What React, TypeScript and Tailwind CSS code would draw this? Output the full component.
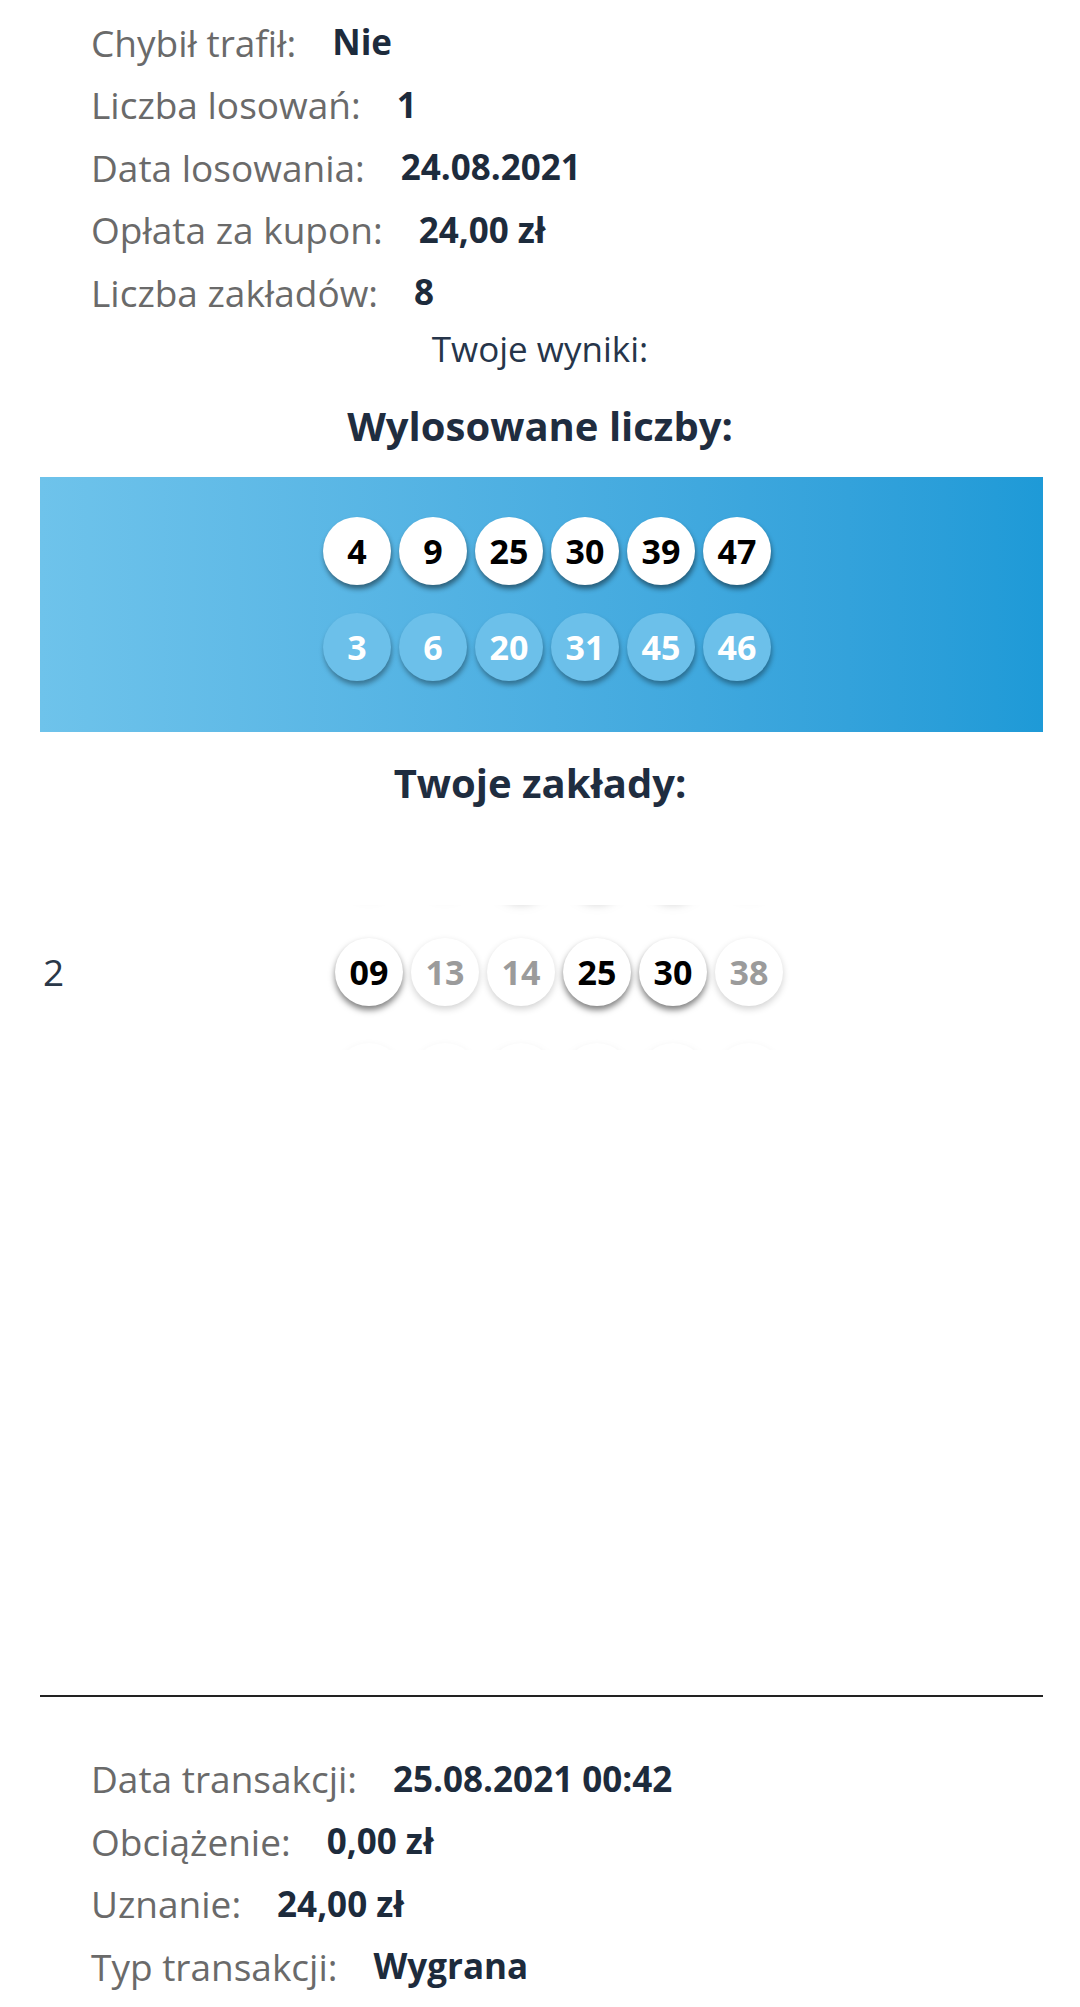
import React from "react";

type Variant = "drawn" | "plus" | "hit" | "miss";

function Ball({ n, v }: { n: string; v: Variant }) {
  const styles: Record<Variant, string> = {
    drawn: "bg-white text-black shadow-[1px_4px_5px_rgba(0,0,0,0.45)]",
    plus: "bg-[#6cc0ea] text-white shadow-[1px_4px_5px_rgba(0,0,0,0.35)]",
    hit: "bg-white text-black shadow-[0px_4px_6px_rgba(0,0,0,0.5)]",
    miss: "bg-white text-[#9b9b9b] shadow-[0px_3px_7px_rgba(0,0,0,0.18)]",
  };
  return (
    <div
      className={`w-[68px] h-[68px] rounded-full flex items-center justify-center text-[34px] font-bold leading-none shrink-0 ${styles[v]}`}
    >
      {n}
    </div>
  );
}

function GhostBall({ hit }: { hit: boolean }) {
  return (
    <div
      className={`w-[68px] h-[68px] rounded-full bg-white shrink-0 ${
        hit
          ? "shadow-[0px_5px_7px_rgba(0,0,0,0.5)]"
          : "shadow-[0px_2px_6px_rgba(0,0,0,0.12)]"
      }`}
    />
  );
}

function InfoRow({ label, value }: { label: string; value: string }) {
  return (
    <div className="h-[62.5px] flex items-center gap-[36px] pl-[91px]">
      <span className="text-[37px] text-[#6a6a6a]">{label}</span>
      <span className="text-[35px] font-bold text-[#1d2b3c]">{value}</span>
    </div>
  );
}

function BetRow({ label, balls }: { label: string; balls: { n: string; hit: boolean }[] }) {
  return (
    <div className="h-[105px] flex items-center pl-[43px]">
      <span className="w-[292px] text-[37px] text-[#2a3848]">{label}</span>
      <div className="flex gap-[8px]">
        {balls.map((b, i) => (
          <Ball key={i} n={b.n} v={b.hit ? "hit" : "miss"} />
        ))}
      </div>
    </div>
  );
}

function GhostRow({ hits, className }: { hits: boolean[]; className?: string }) {
  return (
    <div className={`h-[105px] flex items-center pl-[335px] ${className ?? ""}`}>
      <div className="flex gap-[8px]">
        {hits.map((h, i) => (
          <GhostBall key={i} hit={h} />
        ))}
      </div>
    </div>
  );
}

export default function App() {
  const font = { fontFamily: '"Open Sans", "Noto Sans", sans-serif' };
  const drawn = ["4", "9", "25", "30", "39", "47"];
  const plus = ["3", "6", "20", "31", "45", "46"];
  const bet = [
    { n: "09", hit: true },
    { n: "13", hit: false },
    { n: "14", hit: false },
    { n: "25", hit: true },
    { n: "30", hit: true },
    { n: "38", hit: false },
  ];

  return (
    <div className="w-[1080px] min-h-[2007px] bg-white pt-[11px]" style={font}>
      <InfoRow label="Chybił trafił:" value="Nie" />
      <InfoRow label="Liczba losowań:" value="1" />
      <InfoRow label="Data losowania:" value="24.08.2021" />
      <InfoRow label="Opłata za kupon:" value="24,00 zł" />
      <InfoRow label="Liczba zakładów:" value="8" />

      <div className="h-[51px] flex items-center justify-center text-[35px] text-[#26354a]">
        Twoje wyniki:
      </div>

      <div className="h-[102.5px] flex items-center justify-center text-[40px] font-bold text-[#1f2d40]">
        Wylosowane liczby:
      </div>

      <div className="ml-[40px] mr-[37px] h-[255px] bg-gradient-to-r from-[#6ec3eb] to-[#1e9ad7] pt-[40px] flex flex-col gap-[28px]">
        <div className="flex justify-center gap-[8px] pl-[11px]">
          {drawn.map((n) => (
            <Ball key={n} n={n} v="drawn" />
          ))}
        </div>
        <div className="flex justify-center gap-[8px] pl-[11px]">
          {plus.map((n) => (
            <Ball key={n} n={n} v="plus" />
          ))}
        </div>
      </div>

      <div className="h-[102px] flex items-center justify-center text-[40px] font-bold text-[#1f2d40]">
        Twoje zakłady:
      </div>

      <div className="h-[861px] pt-[71px]">
        <div className="h-[145px] overflow-hidden">
          <div className="-mt-[90.5px] flex flex-col">
            <GhostRow hits={[false, false, true, true, true, false]} className="opacity-25" />
            <BetRow label="2" balls={bet} />
            <GhostRow hits={[false, false, true, true, true, false]} className="opacity-40" />
          </div>
        </div>
      </div>

      <div className="ml-[40px] mr-[37px] h-[2px] bg-[#222]" />

      <div className="pt-[50.75px] pb-[10px]">
        <InfoRow label="Data transakcji:" value="25.08.2021 00:42" />
        <InfoRow label="Obciążenie:" value="0,00 zł" />
        <InfoRow label="Uznanie:" value="24,00 zł" />
        <InfoRow label="Typ transakcji:" value="Wygrana" />
      </div>
    </div>
  );
}
